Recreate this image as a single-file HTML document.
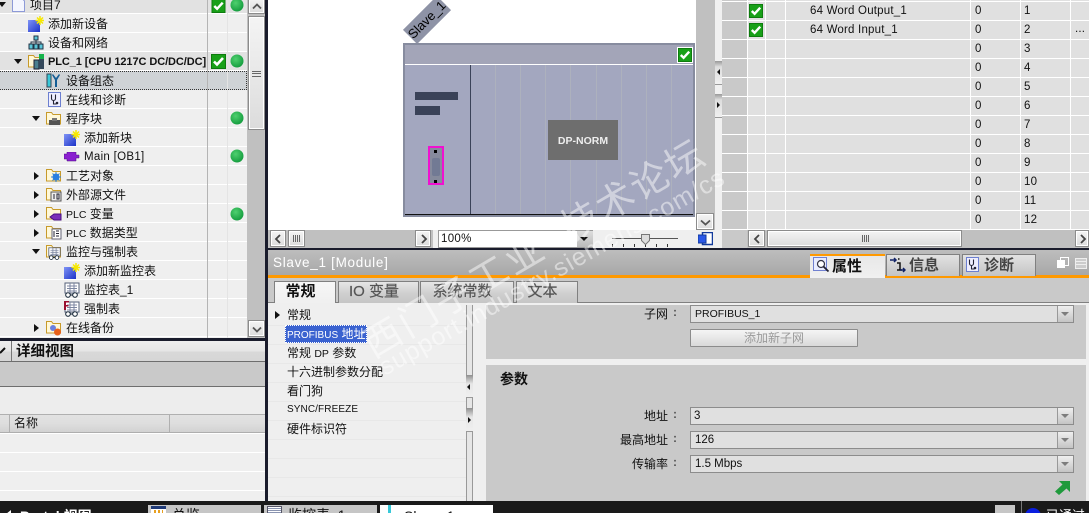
<!DOCTYPE html>
<html lang="zh">
<head>
<meta charset="utf-8">
<title>Slave_1 [Module]</title>
<style>
html,body{margin:0;padding:0;width:1089px;height:513px;overflow:hidden;background:#1a1a1a}
body{position:relative;font:12px/18px "Liberation Sans","Noto Sans CJK SC",sans-serif;color:#111}
div,span.a,svg{position:absolute;box-sizing:border-box}
.r{left:0;width:247px;height:19px;background:#efefef;border-bottom:1px solid #fff;white-space:nowrap}
.t{top:1px;line-height:18px;white-space:nowrap}
.l{font-size:10.5px}
.ar{width:0;height:0;border-left:4px solid transparent;border-right:4px solid transparent;border-top:5px solid #111;top:7px}
.ac{width:0;height:0;border-top:4px solid transparent;border-bottom:4px solid transparent;border-left:5px solid #111;top:5px}
.btn{background:linear-gradient(#f4f4f4,#dcdcdc);border:1px solid #8c8c8c;box-shadow:inset 0 0 0 1px #fff}
.tab{top:281px;height:22px;background:linear-gradient(#e6e6e6,#cfcfcf 55%,#c6c6c6);border:1px solid #808080;border-bottom:0;text-align:center;font-size:15px;line-height:20px;color:#555;-webkit-text-stroke:.2px #555;padding-right:9px;white-space:nowrap}
.tp{top:254px;height:22px;background:linear-gradient(#e2e2e2,#c4c4c4);border:1px solid #808080;border-bottom:0;font-size:15px;font-weight:700;line-height:21px;color:#444}
.in{left:690px;width:384px;height:18px;background:#e0e0e0;border:1px solid #8c8c8c;line-height:16px;padding-left:4px;font-size:11.5px}
.dd{right:0;top:0;width:16px;height:16px;background:linear-gradient(#efefef,#c4c4c4);border-left:1px solid #999}
.dd:after{content:"";position:absolute;left:3px;top:6px;border-left:4px solid transparent;border-right:4px solid transparent;border-top:4px solid #7d7d7d}
.lb{right:421px;line-height:18px;font-size:12px;white-space:nowrap}
.c{font-size:11.5px;line-height:18px;white-space:nowrap;letter-spacing:.2px}
.g{width:1px;top:65px;height:149px;background:#adb1bd}
</style>
</head>
<body>
<svg width="0" height="0" style="left:0;top:0">
<defs>
<linearGradient id="gb" x1="0" y1="0" x2="1" y2="1"><stop offset="0" stop-color="#7f93f5"/><stop offset="1" stop-color="#1c33c8"/></linearGradient>
<radialGradient id="gd" cx=".4" cy=".35" r=".7"><stop offset="0" stop-color="#4fd06f"/><stop offset="1" stop-color="#129a3c"/></radialGradient>
<symbol id="ck" viewBox="0 0 15 15"><rect x=".5" y=".5" width="14" height="14" fill="#18a018" stroke="#0d7a0d"/><path d="M3 7.500l3 3 6-6.500" fill="none" stroke="#fff" stroke-width="2.600"/></symbol>
<symbol id="dot" viewBox="0 0 14 14"><circle cx="7" cy="7" r="6.500" fill="url(#gd)"/></symbol>
<symbol id="nw" viewBox="0 0 16 16"><rect x="0" y="4" width="12" height="12" fill="url(#gb)"/><path d="M12 0v9M7.500 4.500h9M9 1.500l6 6M15 1.500l-6 6" stroke="#f6e800" stroke-width="1.500"/></symbol>
<symbol id="fo" viewBox="0 0 16 16"><path d="M.5 13V1.500h5l1.500 2h7.500V13z" fill="#fff8d8" stroke="#c79a2a"/></symbol>
<symbol id="gl" viewBox="0 0 16 16"><rect x="1" y="1" width="14" height="10" fill="#fff" stroke="#55607a"/><path d="M3 4h10M3 6.500h10M3 9h10M6 1v10M10 1v10" stroke="#7c86a0"/><circle cx="4" cy="13" r="2.300" fill="#fff" stroke="#123"/><circle cx="11" cy="13" r="2.300" fill="#fff" stroke="#123"/><path d="M6 13h3" stroke="#123"/></symbol>
<symbol id="ste" viewBox="0 0 13 15"><rect x=".5" y=".5" width="12" height="14" fill="#eef" stroke="#6c7fd0"/><path d="M3.500 2.500v4a2 2 0 0 0 4 0v-4M5.500 9v3h3" fill="none" stroke="#223" stroke-width="1.100"/><circle cx="9" cy="11" r="1.300" fill="#223"/></symbol>
</defs>
</svg>

<!-- Left tree -->
<div style="left:0;top:0;width:265px;height:338px;background:#efefef"></div>
<div class="r" style="top:-5px;background:#e2e2e2"><div class="t" style="left:30px">项目7</div></div>
<div class="r" style="top:14px"><div class="t" style="left:48px">添加新设备</div></div>
<div class="r" style="top:33px"><div class="t" style="left:48px">设备和网络</div></div>
<div class="r" style="top:52px;background:#e2e2e2"><div class="t" style="left:48px;font-weight:700;font-size:11px;letter-spacing:-.08px">PLC_1 [CPU 1217C DC/DC/DC]</div></div>
<div class="r" style="top:71px;background:#cfd3d6;border:1px dotted #333;border-width:1px 1px 1px 0"><div class="t" style="left:66px;top:0">设备组态</div></div>
<div class="r" style="top:90px"><div class="t" style="left:66px">在线和诊断</div></div>
<div class="r" style="top:109px"><div class="t" style="left:66px">程序块</div></div>
<div class="r" style="top:128px"><div class="t" style="left:84px">添加新块</div></div>
<div class="r" style="top:147px"><div class="t" style="left:84px;font-size:11.5px;letter-spacing:.3px">Main [OB1]</div></div>
<div class="r" style="top:166px"><div class="t" style="left:66px">工艺对象</div></div>
<div class="r" style="top:185px"><div class="t" style="left:66px">外部源文件</div></div>
<div class="r" style="top:204px"><div class="t" style="left:66px"><span class="l">PLC</span> 变量</div></div>
<div class="r" style="top:223px"><div class="t" style="left:66px"><span class="l">PLC</span> 数据类型</div></div>
<div class="r" style="top:242px"><div class="t" style="left:66px">监控与强制表</div></div>
<div class="r" style="top:261px"><div class="t" style="left:84px">添加新监控表</div></div>
<div class="r" style="top:280px"><div class="t" style="left:84px">监控表_1</div></div>
<div class="r" style="top:299px"><div class="t" style="left:84px">强制表</div></div>
<div class="r" style="top:318px"><div class="t" style="left:66px">在线备份</div></div>
<div style="left:207px;top:0;width:1px;height:338px;background:#b4b4b4"></div>
<div style="left:227px;top:0;width:1px;height:338px;background:#e4e4e4"></div>
<!-- arrows -->
<div class="ar" style="left:14px;top:59px"></div>
<div class="ar" style="left:32px;top:116px"></div>
<div class="ac" style="left:34px;top:172px"></div>
<div class="ac" style="left:34px;top:191px"></div>
<div class="ac" style="left:34px;top:210px"></div>
<div class="ac" style="left:34px;top:229px"></div>
<div class="ar" style="left:32px;top:249px"></div>
<div class="ac" style="left:34px;top:324px"></div>
<div class="ar" style="left:-2px;top:2px"></div>
<!-- tree icons -->
<svg style="left:12px;top:-2px" width="13" height="14"><path d="M.5 0h9l3 3v10.500H.5z" fill="#f4f6ff" stroke="#8d9ad8"/></svg>
<svg style="left:28px;top:16px" width="16" height="16"><use href="#nw"/></svg>
<svg style="left:28px;top:35px" width="16" height="16"><path d="M6 1h4v4H6zM1 9h4v5H1zM6 9h4v5H6zM11 9h4v5h-4z" fill="#5cc6d8" stroke="#234"/><path d="M8 5v2M3 9V7h10v2M8 7v2" stroke="#234" fill="none"/></svg>
<svg style="left:28px;top:54px" width="18" height="16"><use href="#fo" width="16" height="16"/><rect x="6" y="6" width="5" height="9" fill="#4b7f8f" stroke="#223"/><rect x="11" y="5" width="5" height="10" fill="#33475a"/><rect x="11" y="0" width="5" height="5" fill="#13b34a"/></svg>
<svg style="left:46px;top:73px" width="16" height="15"><rect x="1" y="1" width="4" height="13" fill="#38c8d8" stroke="#345"/><path d="M7 1l3 4 3-4 1 1-3 5v7h-2V7L6 2z" fill="#145d95"/></svg>
<svg style="left:48px;top:92px" width="13" height="15"><use href="#ste"/></svg>
<svg style="left:46px;top:111px" width="16" height="16"><use href="#fo"/><rect x="3" y="9" width="11" height="5" fill="#555"/><rect x="6" y="7" width="5" height="3" fill="#777"/></svg>
<svg style="left:64px;top:130px" width="16" height="16"><use href="#nw"/></svg>
<svg style="left:64px;top:152px" width="16" height="10"><path d="M0 2h3V0h9v3h3v3h-3v3H3V7H0z" fill="#8a1fd0" stroke="#4a0a80" stroke-width=".5"/></svg>
<svg style="left:46px;top:168px" width="16" height="16"><use href="#fo"/><circle cx="10" cy="9" r="3.500" fill="#2a7fe0"/><path d="M10 4v10M5 9h10M6.500 5.500l7 7M13.500 5.500l-7 7" stroke="#2a7fe0"/></svg>
<svg style="left:46px;top:187px" width="16" height="16"><use href="#fo"/><rect x="5" y="5" width="10" height="9" fill="#eee" stroke="#555"/><path d="M8 7v5M11 7h2v5h-2z" fill="none" stroke="#223"/></svg>
<svg style="left:46px;top:206px" width="16" height="16"><use href="#fo"/><path d="M4 11l4-3h7v6H8z" fill="#7a2fb8" stroke="#4a1080"/></svg>
<svg style="left:46px;top:225px" width="16" height="16"><use href="#fo"/><rect x="6" y="4" width="9" height="10" fill="#fff" stroke="#667"/><path d="M8 6v6M10 6h3M10 8.500h3M10 11h3" stroke="#223"/></svg>
<svg style="left:46px;top:244px" width="16" height="16"><use href="#fo"/><use href="#gl" x="1" y="3" width="15" height="13"/></svg>
<svg style="left:64px;top:263px" width="16" height="16"><use href="#nw"/></svg>
<svg style="left:64px;top:282px" width="16" height="16"><use href="#gl"/></svg>
<svg style="left:64px;top:301px" width="16" height="16"><use href="#gl"/><path d="M0 0h5v1.500H2V4h2.500v1.500H2V9H0z" fill="#9a1030"/></svg>
<svg style="left:46px;top:320px" width="16" height="16"><use href="#fo"/><circle cx="7" cy="8" r="3" fill="#6a80e0"/><circle cx="11.500" cy="12" r="3.500" fill="#e8601a"/></svg>
<!-- status -->
<svg style="left:211px;top:-1px" width="15" height="14"><use href="#ck" width="15" height="14"/></svg>
<svg style="left:230px;top:-2px" width="14" height="14"><use href="#dot"/></svg>
<svg style="left:211px;top:54px" width="15" height="15"><use href="#ck"/></svg>
<svg style="left:230px;top:54px" width="14" height="14"><use href="#dot"/></svg>
<svg style="left:230px;top:111px" width="14" height="14"><use href="#dot"/></svg>
<svg style="left:230px;top:149px" width="14" height="14"><use href="#dot"/></svg>
<svg style="left:230px;top:207px" width="14" height="14"><use href="#dot"/></svg>
<!-- tree scrollbar -->
<div style="left:247px;top:0;width:18px;height:338px;background:#c0c0c0"></div>
<div class="btn" style="left:248px;top:-3px;width:17px;height:17px"><svg style="left:3px;top:5px" width="10" height="7"><path d="M1 5.500l4-4 4 4" fill="none" stroke="#555" stroke-width="1.800"/></svg></div>
<div class="btn" style="left:248px;top:16px;width:17px;height:114px"><div style="left:3px;top:54px;width:9px;height:6px;border-top:1px solid #666;border-bottom:1px solid #666"></div><div style="left:3px;top:56px;width:9px;height:1px;background:#666"></div></div>
<div class="btn" style="left:248px;top:320px;width:17px;height:17px"><svg style="left:3px;top:5px" width="10" height="7"><path d="M1 1.500l4 4 4-4" fill="none" stroke="#555" stroke-width="1.800"/></svg></div>

<div style="left:265px;top:0;width:3px;height:501px;background:#1a1c2c"></div>
<div style="left:0;top:338px;width:268px;height:3px;background:#1a1c2c"></div>

<!-- Detail view -->
<div style="left:0;top:341px;width:265px;height:21px;background:linear-gradient(#eee,#e6e6e6 50%,#d8d8d8 55%,#d6d6d6);border-bottom:1px solid #6e6e6e"></div>
<div style="left:11px;top:341px;width:1px;height:20px;background:#777"></div>
<svg style="left:0;top:347px" width="7" height="7"><path d="M0 6L5 1" stroke="#111" stroke-width="2"/></svg>
<div style="left:16px;top:343px;font-size:14.5px;font-weight:700;line-height:19px">详细视图</div>
<div style="left:0;top:362px;width:265px;height:25px;background:#c9c9c9;border-bottom:1px solid #6e6e6e"></div>
<div style="left:0;top:387px;width:265px;height:27px;background:#ededed"></div>
<div style="left:0;top:414px;width:265px;height:19px;background:linear-gradient(#e2e2e2,#dedede 50%,#d2d2d2);border-top:1px solid #b0b0b0;border-bottom:1px solid #aeaeae"></div>
<div style="left:9px;top:415px;width:1px;height:17px;background:#b0b0b0"></div>
<div style="left:169px;top:415px;width:1px;height:17px;background:#b0b0b0"></div>
<div style="left:14px;top:414px">名称</div>
<div style="left:0;top:433px;width:265px;height:68px;background:repeating-linear-gradient(#fff 0 1px,#efefef 1px 19px)"></div>

<!-- Canvas -->
<div style="left:268px;top:0;width:428px;height:230px;background:#fff"></div>
<div style="left:403px;top:10px;width:48px;height:20px;background:#8e93a6;transform:rotate(-45deg);transform-origin:center;text-align:center;font-size:13px;line-height:20px;color:#000;white-space:nowrap">Slave_1</div>
<div style="left:403px;top:43px;width:292px;height:174px;background:#a3a7bf;border:2px solid #878c9f"></div>
<div style="left:405px;top:45px;width:288px;height:19px;background:#a3a5b8"></div>
<div style="left:405px;top:64px;width:288px;height:1px;background:#fff"></div>
<svg style="left:677px;top:47px" width="16" height="16"><rect width="16" height="16" fill="#fff"/><use href="#ck" x="1" y="1" width="14" height="14"/></svg>
<div style="left:470px;top:65px;width:1px;height:149px;background:#3a4258"></div>
<div class="g" style="left:495px"></div><div class="g" style="left:520px"></div><div class="g" style="left:545px"></div><div class="g" style="left:570px"></div><div class="g" style="left:596px"></div><div class="g" style="left:621px"></div><div class="g" style="left:646px"></div><div class="g" style="left:671px"></div>
<div style="left:405px;top:214px;width:288px;height:1px;background:#111"></div>
<div style="left:415px;top:92px;width:43px;height:8px;background:#3a4258"></div>
<div style="left:415px;top:106px;width:25px;height:9px;background:#3a4258"></div>
<div style="left:428px;top:146px;width:16px;height:39px;background:#868a9c;border:2px solid #f010d0"></div>
<div style="left:434px;top:150px;width:3px;height:3px;background:#000"></div>
<div style="left:434px;top:180px;width:3px;height:3px;background:#000"></div>
<div style="left:432px;top:158px;width:8px;height:18px;background:#727a94;border-radius:2px"></div>
<div style="left:548px;top:120px;width:70px;height:40px;background:#6e6e6e;color:#eee;font-weight:700;font-size:10.5px;line-height:42px;text-align:center">DP-NORM</div>

<!-- Canvas scrollbars -->
<div style="left:696px;top:0;width:19px;height:230px;background:#c0c0c0"></div>
<div class="btn" style="left:696px;top:213px;width:18px;height:17px"><svg style="left:3px;top:5px" width="11" height="7"><path d="M1 1.500l4.500 4 4.500-4" fill="none" stroke="#555" stroke-width="1.800"/></svg></div>
<div style="left:268px;top:230px;width:447px;height:18px;background:#efefef"></div>
<div style="left:268px;top:230px;width:165px;height:18px;background:#c0c0c0"></div>
<div class="btn" style="left:270px;top:230px;width:16px;height:17px"><svg style="left:3px;top:3px" width="8" height="10"><path d="M6 1L2 5l4 4" fill="none" stroke="#444" stroke-width="1.800"/></svg></div>
<div class="btn" style="left:288px;top:230px;width:17px;height:17px"><div style="left:4px;top:4px;width:7px;height:7px;background:repeating-linear-gradient(90deg,#666 0 1px,transparent 1px 2px)"></div></div>
<div class="btn" style="left:415px;top:230px;width:16px;height:17px"><svg style="left:4px;top:3px" width="8" height="10"><path d="M2 1l4 4-4 4" fill="none" stroke="#444" stroke-width="1.800"/></svg></div>
<div style="left:438px;top:230px;width:155px;height:18px;background:#fff;border:1px solid #999;font-size:11.5px;line-height:17px;padding-left:2px;letter-spacing:.3px">100%</div>
<div style="left:577px;top:231px;width:16px;height:16px;background:linear-gradient(#ddd,#bbb)"><div style="left:3px;top:6px;border-left:4px solid transparent;border-right:4px solid transparent;border-top:4px solid #111"></div></div>
<div style="left:612px;top:238px;width:66px;height:1px;background:#555"></div>
<div style="left:612px;top:244px;width:66px;height:3px;background:repeating-linear-gradient(90deg,#333 0 1px,transparent 1px 11px)"></div>
<svg style="left:641px;top:234px" width="9" height="11"><path d="M.5.500h8v6l-4 4-4-4z" fill="#ddd" stroke="#777"/></svg>
<svg style="left:698px;top:232px" width="15" height="15"><rect x="4.500" y=".5" width="10" height="12" fill="#fff" stroke="#123a9c" stroke-width="1.500"/><rect x="0" y="3" width="8" height="8" fill="#2a58e8" stroke="#123a9c"/></svg>

<!-- Right strip & table -->
<div style="left:715px;top:0;width:7px;height:248px;background:#f0f0f0"></div>
<div style="left:715px;top:61px;width:7px;height:24px;background:linear-gradient(#999,#ddd 25%,#f0f0f0);border-bottom:1px solid #999"><div style="left:2px;top:8px;border-top:3px solid transparent;border-bottom:3px solid transparent;border-right:3px solid #111"></div></div>
<div style="left:715px;top:94px;width:7px;height:24px;background:linear-gradient(#999,#ddd 25%,#f0f0f0);border-bottom:1px solid #999"><div style="left:2px;top:8px;border-top:3px solid transparent;border-bottom:3px solid transparent;border-left:3px solid #111"></div></div>
<div style="left:722px;top:0;width:367px;height:248px;background:#e0e0e0"></div>
<div style="left:722px;top:0;width:25px;height:248px;background:#c9c9c9"></div>
<div style="left:722px;top:1px;width:367px;height:229px;background:repeating-linear-gradient(#fff 0 1px,transparent 1px 19px)"></div>
<div style="left:747px;top:0;width:1px;height:230px;background:#fff"></div>
<div style="left:765px;top:0;width:1px;height:230px;background:#fff"></div>
<div style="left:785px;top:0;width:1px;height:230px;background:#fff"></div>
<div style="left:970px;top:0;width:1px;height:230px;background:#fff"></div>
<div style="left:1020px;top:0;width:1px;height:230px;background:#fff"></div>
<div style="left:1070px;top:0;width:1px;height:230px;background:#fff"></div>
<svg style="left:749px;top:4px" width="14" height="14"><use href="#ck" width="14" height="14"/></svg>
<svg style="left:749px;top:23px" width="14" height="14"><use href="#ck" width="14" height="14"/></svg>
<div class="c" style="left:810px;top:2px">64 Word Output_1</div>
<div class="c" style="left:810px;top:21px">64 Word Input_1</div>
<div class="c" style="left:975px;top:2px">0</div><div class="c" style="left:1024px;top:2px">1</div>
<div class="c" style="left:975px;top:21px">0</div><div class="c" style="left:1024px;top:21px">2</div>
<div class="c" style="left:1075px;top:20px">...</div>
<div class="c" style="left:975px;top:40px">0</div><div class="c" style="left:1024px;top:40px">3</div>
<div class="c" style="left:975px;top:59px">0</div><div class="c" style="left:1024px;top:59px">4</div>
<div class="c" style="left:975px;top:78px">0</div><div class="c" style="left:1024px;top:78px">5</div>
<div class="c" style="left:975px;top:97px">0</div><div class="c" style="left:1024px;top:97px">6</div>
<div class="c" style="left:975px;top:116px">0</div><div class="c" style="left:1024px;top:116px">7</div>
<div class="c" style="left:975px;top:135px">0</div><div class="c" style="left:1024px;top:135px">8</div>
<div class="c" style="left:975px;top:154px">0</div><div class="c" style="left:1024px;top:154px">9</div>
<div class="c" style="left:975px;top:173px">0</div><div class="c" style="left:1024px;top:173px">10</div>
<div class="c" style="left:975px;top:192px">0</div><div class="c" style="left:1024px;top:192px">11</div>
<div class="c" style="left:975px;top:211px">0</div><div class="c" style="left:1024px;top:211px">12</div>
<div style="left:747px;top:230px;width:342px;height:18px;background:#c0c0c0"></div>
<div class="btn" style="left:748px;top:230px;width:17px;height:17px"><svg style="left:4px;top:3px" width="8" height="10"><path d="M6 1L2 5l4 4" fill="none" stroke="#444" stroke-width="1.800"/></svg></div>
<div class="btn" style="left:767px;top:230px;width:195px;height:17px"><div style="left:94px;top:4px;width:7px;height:7px;background:repeating-linear-gradient(90deg,#666 0 1px,transparent 1px 2px)"></div></div>
<div class="btn" style="left:1075px;top:230px;width:14px;height:17px"><svg style="left:3px;top:3px" width="8" height="10"><path d="M2 1l4 4-4 4" fill="none" stroke="#444" stroke-width="1.800"/></svg></div>

<div style="left:268px;top:248px;width:821px;height:2px;background:#1a1c2c"></div>

<!-- Properties title -->
<div style="left:268px;top:250px;width:821px;height:25px;background:linear-gradient(#bdbdbd,#a8a8a8)"></div>
<div style="left:273px;top:254px;color:#fff;font-size:13.5px;letter-spacing:.7px;line-height:18px">Slave_1 [Module]</div>
<div style="left:268px;top:275px;width:821px;height:3px;background:#f90"></div>
<div class="tp" style="left:810px;width:75px;height:24px;background:linear-gradient(#e8e8e8,#f0f0f0);border-top:2px solid #f90;border-color:#f90;border-width:2px 0 0;color:#111;padding-left:22px">属性</div>
<svg style="left:813px;top:257px" width="17" height="16"><rect x=".5" y=".5" width="13" height="13" fill="#e8ecff" stroke="#7080d0"/><circle cx="8" cy="7" r="3.500" fill="#fff" stroke="#334" stroke-width="1.200"/><path d="M10.500 9.500l5 5" stroke="#223" stroke-width="1.800"/></svg>
<div class="tp" style="left:886px;width:74px;padding-left:22px">信息</div>
<svg style="left:889px;top:256px" width="17" height="17"><path d="M1 4h6M5 2l2 2-2 2" stroke="#112266" fill="none" stroke-width="1.500"/><path d="M9 3h1.500M8 7h3v7h2M8 14h3" stroke="#111" stroke-width="1.500" fill="none"/><path d="M11 14h5M14 12l2 2-2 2" stroke="#112266" fill="none" stroke-width="1.500"/></svg>
<div class="tp" style="left:962px;width:74px;padding-left:21px">诊断</div>
<svg style="left:966px;top:257px" width="13" height="15"><use href="#ste"/></svg>
<svg style="left:1057px;top:257px" width="12" height="12"><rect x="3.500" y=".5" width="8" height="8" fill="none" stroke="#fff"/><rect x="0" y="3" width="8" height="8" fill="#fff"/></svg>
<svg style="left:1075px;top:258px" width="12" height="11"><rect x=".5" y=".5" width="11" height="10" fill="#ccc" stroke="#eee"/><path d="M0 3.500h12M0 6.500h12" stroke="#eee"/></svg>

<!-- Sub tabs -->
<div style="left:268px;top:278px;width:821px;height:25px;background:#c9c9c9;border-bottom:1px solid #808080"></div>
<div class="tab" style="left:274px;width:62px;height:24px;background:linear-gradient(#f6f6f6,#efefef);color:#111;font-weight:700;-webkit-text-stroke:0">常规</div>
<div class="tab" style="left:338px;width:81px">IO 变量</div>
<div class="tab" style="left:420px;width:94px">系统常数</div>
<div class="tab" style="left:516px;width:62px">文本</div>

<!-- Left nav -->
<div style="left:268px;top:303px;width:821px;height:198px;background:#efefef"></div>
<div style="left:268px;top:325px;width:198px;height:176px;background:repeating-linear-gradient(#e8e8e8 0 1px,transparent 1px 19px)"></div>
<div class="ac" style="left:275px;top:311px"></div>
<div class="t" style="left:287px;top:306px">常规</div>
<div style="left:285px;top:325px;width:82px;height:18px;background:#3a62d0;color:#fff;border:1px dotted #fff;line-height:16px;padding-left:1px;white-space:nowrap;font-size:12px"><span style="font-size:10px">PROFIBUS</span> 地址</div>
<div class="t" style="left:287px;top:344px">常规 <span class="l">DP</span> 参数</div>
<div class="t" style="left:287px;top:363px">十六进制参数分配</div>
<div class="t" style="left:287px;top:382px">看门狗</div>
<div class="t" style="left:287px;top:401px;font-size:10px;letter-spacing:.1px">SYNC/FREEZE</div>
<div class="t" style="left:287px;top:420px">硬件标识符</div>
<div style="left:466px;top:305px;width:7px;height:196px;background:#e6e6e6;border:1px solid #999;border-width:0 1px"></div>
<div style="left:466px;top:375px;width:7px;height:23px;background:linear-gradient(#8f8f8f,#e6e6e6 40%,#efefef);border-bottom:1px solid #999"><div style="left:1px;top:9px;border-top:3px solid transparent;border-bottom:3px solid transparent;border-right:3px solid #111"></div></div>
<div style="left:466px;top:408px;width:7px;height:24px;background:linear-gradient(#8f8f8f,#e6e6e6 40%,#efefef);border-bottom:1px solid #999"><div style="left:2px;top:9px;border-top:3px solid transparent;border-bottom:3px solid transparent;border-left:3px solid #111"></div></div>

<!-- Right form -->
<div style="left:486px;top:305px;width:600px;height:54px;background:#c9c9c9"></div>
<div style="left:486px;top:365px;width:600px;height:136px;background:#c9c9c9"></div>
<div class="lb" style="top:305px">子网</div><div class="lb" style="top:303px;right:412px;color:#555;font-weight:700">:</div>
<div class="in" style="top:305px;font-size:10.5px">PROFIBUS_1<div class="dd"></div></div>
<div style="left:690px;top:329px;width:168px;height:18px;background:linear-gradient(#f5f5f5,#d9d9d9);border:1px solid #8c8c8c;border-radius:1px;text-align:center;color:#9a9a9a;line-height:16px">添加新子网</div>
<div style="left:500px;top:369px;font-size:14px;font-weight:700;line-height:20px">参数</div>
<div class="lb" style="top:407px">地址</div><div class="lb" style="top:405px;right:412px;color:#555;font-weight:700">:</div>
<div class="in" style="top:407px;padding-left:3px">3<div class="dd"></div></div>
<div class="lb" style="top:431px">最高地址</div><div class="lb" style="top:429px;right:412px;color:#555;font-weight:700">:</div>
<div class="in" style="top:431px">126<div class="dd"></div></div>
<div class="lb" style="top:455px">传输率</div><div class="lb" style="top:453px;right:412px;color:#555;font-weight:700">:</div>
<div class="in" style="top:455px">1.5 Mbps<div class="dd"></div></div>
<svg style="left:1055px;top:480px" width="15" height="15"><path d="M4 1h11v11l-3.500-3.500L4 15 0 11.500 7.500 4.500z" fill="#1f9a3c"/></svg>

<!-- Bottom bar -->
<div style="left:0;top:501px;width:1089px;height:12px;background:#1a1a1a"></div>
<div style="left:6px;top:510px;border-top:4px solid transparent;border-bottom:4px solid transparent;border-right:5px solid #fff"></div>
<div style="left:20px;top:507px;color:#fff;font-weight:700;font-size:14px;line-height:18px;white-space:nowrap">Portal 视图</div>
<div style="left:148px;top:505px;width:113px;height:8px;background:#c6c6c6;overflow:hidden"><div style="left:24px;top:1px;font-size:14px;line-height:18px">总览</div><div style="left:3px;top:1px;width:15px;height:8px;background:#fff;border-top:3px solid #1f3a78"></div><div style="left:6px;top:5px;width:9px;height:3px;background:repeating-linear-gradient(90deg,#e8a020 0 2px,#fff 2px 4px)"></div></div>
<div style="left:264px;top:505px;width:113px;height:8px;background:#c6c6c6;overflow:hidden"><div style="left:24px;top:1px;font-size:14px;line-height:18px;white-space:nowrap">监控表_1</div><div style="left:3px;top:1px;width:15px;height:8px;background:repeating-linear-gradient(#fff 0 1px,#8a94b0 1px 2px);border:1px solid #556"></div></div>
<div style="left:380px;top:505px;width:113px;height:8px;background:#fff;overflow:hidden"><div style="left:24px;top:2px;font-size:14px;line-height:18px;white-space:nowrap">Slave_1</div><div style="left:8px;top:0;width:3px;height:8px;background:#38c8d8"></div></div>
<div style="left:995px;top:505px;width:20px;height:8px;background:#c6c6c6"></div>
<div style="left:1021px;top:501px;width:1px;height:12px;background:#777"></div>
<div style="left:1025px;top:508px;width:16px;height:16px;border-radius:8px;background:#0a1ee0"></div>
<div style="left:1046px;top:507px;color:#fff;font-size:13px;line-height:18px;white-space:nowrap">已通过</div>

<!-- Watermark -->
<svg style="left:0;top:0;pointer-events:none" width="1089" height="513">
<g fill="#fff" fill-opacity=".48" font-family="'Liberation Sans','Noto Sans CJK SC',sans-serif">
<text transform="translate(373,359) rotate(-30.5)" font-size="38" letter-spacing="3">西门子工业</text>
<text transform="translate(571,242) rotate(-30.5)" font-size="38" letter-spacing="2">技术论坛</text>
<text transform="translate(385,376) rotate(-29.5)" font-size="25" textLength="392" lengthAdjust="spacing">support.industry.siemens.com/cs</text>
</g>
</svg>
</body>
</html>
